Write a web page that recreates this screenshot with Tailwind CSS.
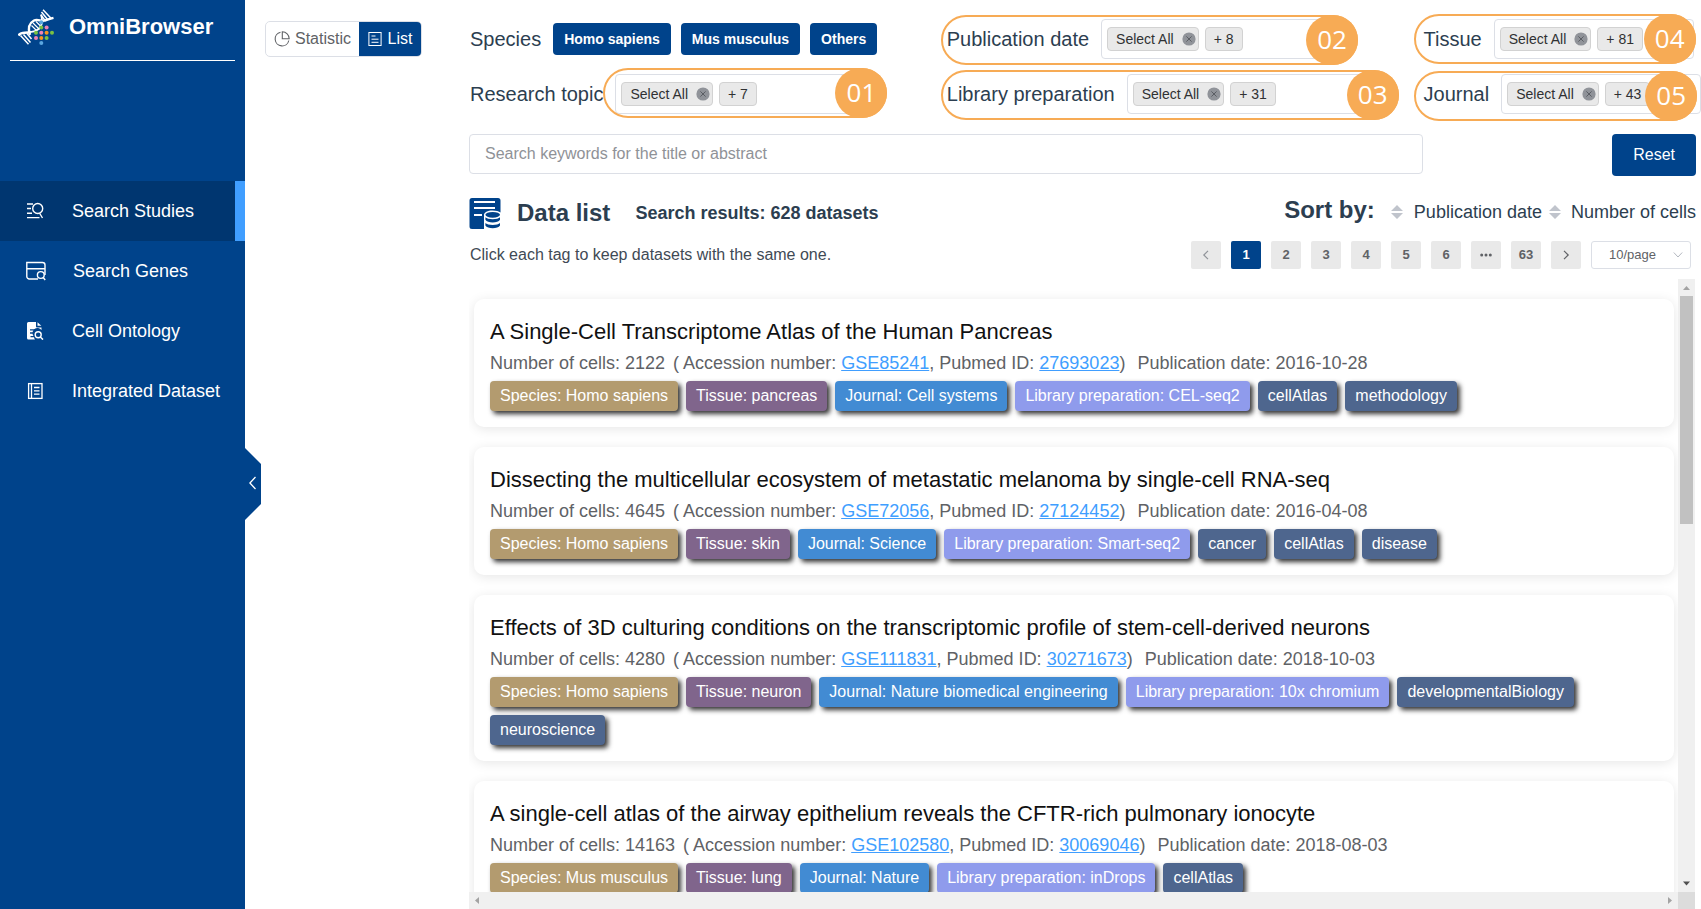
<!DOCTYPE html>
<html lang="en">
<head>
<meta charset="utf-8">
<meta name="viewport" content="width=device-width, initial-scale=1">
<title>OmniBrowser</title>
<script src="https://cdn.jsdelivr.net/npm/@tailwindcss/browser@4"></script>
</head>
<body class="flex h-screen overflow-hidden bg-white font-['Liberation_Sans',Arial,sans-serif] text-[#2c3e50]">

<!-- shared symbols -->
<svg class="hidden" aria-hidden="true">
  <symbol id="close" viewBox="0 0 14 14"><circle cx="7" cy="7" r="6.6" fill="#909399"/><path d="M4.4 4.4l5.2 5.2M9.6 4.4L4.4 9.6" stroke="#55585e" stroke-width=".9" fill="none"/></symbol>
  <symbol id="sort" viewBox="0 0 12 14"><path d="M6 0l6 6H0zM6 14L0 8h12z" fill="#c0c4cc"/></symbol>
</svg>

<aside class="relative flex w-[245px] shrink-0 flex-col bg-[#00438b] text-white">
  <div class="mx-2.5 flex h-[61px] items-start gap-[15px] border-b border-white pl-2">
    <svg class="mt-[9px] size-9" viewBox="0 0 36 36" fill="none" stroke="#fff">
      <path d="M.5 26.500C3 22 8 25 12.500 22.800" stroke-width="2.600"/>
      <path d="M12 26C10 20 10.500 14.500 16 11.500C20 9.500 23 13 27 11.500C30.500 10.500 32.500 9.500 35.500 8.800" stroke-width="2.400"/>
      <path d="M12 22.800C18 23.500 24 19 24 12C24 9.500 23.500 7 23 5.500" stroke-width="1.800"/>
      <path d="M25 .8l8.500 9M23.500 3l6.500 8M23 6l4 5.500M2.500 26.500l8 8.800M5.500 25.500l7 8M9 24.500l4.500 5.500" stroke-width="1.500"/>
      <path d="M15 14l6.500 6.500M13.500 16.500l5.500 5.500M18 12.500l4.500 4.500" stroke-width="1.200"/>
      <g stroke="none">
        <circle cx="23.300" cy="13.300" r="2" fill="#5ba7e0"/>
        <circle cx="23.300" cy="18.500" r="2" fill="#7ac143"/><circle cx="28.600" cy="18.500" r="2" fill="#ee82b4"/>
        <circle cx="18" cy="23.700" r="2" fill="#7ac143"/><circle cx="23.300" cy="23.700" r="2" fill="#ee82b4"/><circle cx="28.600" cy="23.700" r="2" fill="#f7941d"/><circle cx="34" cy="23.700" r="2" fill="#7ac143"/>
        <circle cx="18" cy="29" r="2" fill="#ee82b4"/><circle cx="23.300" cy="29" r="2" fill="#f7941d"/><circle cx="28.600" cy="29" r="2" fill="#7ac143"/>
        <circle cx="23.300" cy="34" r="2" fill="#5ba7e0"/>
      </g>
    </svg>
    <h1 class="mt-[13px] text-[22px] leading-7 font-bold">OmniBrowser</h1>
  </div>
  <nav class="mt-[120px] flex flex-col text-lg">
    <a href="#studies" aria-current="page" class="flex h-[60px] items-center gap-7 border-r-10 border-[#409eff] bg-[#003670] pl-[26px]">
      <svg class="size-[18px]" viewBox="0 0 18 18" fill="none" stroke="#fff" stroke-width="1.400"><path d="M1 2h6M1 6.500h4M1 11.300h5M1 15.600h12.500"/><circle cx="11.700" cy="6.500" r="5"/><path d="M13.500 11l3 5"/></svg>
      Search Studies</a>
    <a href="#genes" class="flex h-[60px] items-center gap-[27px] pl-[26px]">
      <svg class="size-5" viewBox="0 0 20 20" fill="none" stroke="#fff" stroke-width="1.400"><path d="M12 18H3.500A2.500 2.500 0 0 1 .8 15.500V1.500h15.700A2.500 2.500 0 0 1 19 4v10M.8 7.800H19"/><circle cx="14.800" cy="14" r="3.400"/><path d="M17.200 16.500l2 2.500"/></svg>
      Search Genes</a>
    <a href="#ontology" class="flex h-[60px] items-center gap-7 pl-[26px]">
      <svg class="size-[18px]" viewBox="0 0 18 18"><path d="M2.500 0H10v4.500a1 1 0 0 0 1 1h4.500V8A5 5 0 0 0 7.500 14H4.500v1.300h3.500A5 5 0 0 0 9 17.500H2.500A1.500 1.500 0 0 1 1 16V1.500A1.500 1.500 0 0 1 2.500 0z" fill="#fff"/><path d="M11.500.2l3.800 3.600h-3.800z" fill="#fff"/><path d="M4 7.800h6M4 11h3.500" stroke="#00438b" stroke-width="1.300"/><circle cx="12.200" cy="12.800" r="3" fill="none" stroke="#fff" stroke-width="1.400"/><path d="M14.300 15l2.700 2.600" stroke="#fff" stroke-width="1.500"/></svg>
      Cell Ontology</a>
    <a href="#integrated" class="flex h-[60px] items-center gap-7 pl-[26px]">
      <svg class="size-[18px]" viewBox="0 0 18 18" fill="none" stroke="#fff" stroke-width="1.300"><rect x="2.600" y="1.600" width="13.400" height="14.800"/><path d="M5.500 1.600v14.800M8 5.500h5.500M8 8.800h5.500M8 12.100h5.500"/></svg>
      Integrated Dataset</a>
  </nav>
  <button aria-label="Collapse sidebar" class="absolute top-[448px] left-full z-10 h-[72px] w-4 bg-[#00438b] pb-0.5 [clip-path:polygon(0_0,100%_16px,100%_56px,0_100%)]">
    <svg class="ml-1 h-3.5 w-2" viewBox="0 0 8 14" fill="none" stroke="#fff" stroke-width="1.300"><path d="M6.500 1L.9 7L6.500 13"/></svg>
  </button>
</aside>

<main class="flex min-w-0 flex-1 pl-5">
  <div class="w-[204px] shrink-0 pt-[21px]">
    <div class="flex h-9 w-[157px] overflow-hidden rounded-[5px] border border-[#dcdfe6] text-base">
      <button class="flex items-center gap-[5px] pl-2 pr-2 text-[#606266]">
        <svg class="size-4" viewBox="0 0 16 16" fill="none" stroke="#606266" stroke-width="1.100"><path d="M6.500 1.300A6.900 6.900 0 1 0 14.800 9.500M8.300.8v6.900h6.900A6.900 6.900 0 0 0 8.300.8z"/></svg>Statistic</button>
      <button class="flex flex-1 items-center justify-center gap-1.5 bg-[#00438b] text-white">
        <svg class="size-3.5" viewBox="0 0 14 14" fill="none" stroke="#fff"><rect x=".9" y=".5" width="12.200" height="13"/><path d="M3.500 4h4M3.500 7.200h7M3.500 10.300h7"/></svg>List</button>
    </div>
  </div>

  <div class="flex min-w-0 flex-1 flex-col pr-[5px]">
    <section class="grid grid-cols-[minmax(0,7fr)_minmax(0,7fr)_minmax(0,4fr)] gap-y-[15px] pt-[19px] pl-px text-xl">
      <div class="flex h-10 items-center gap-3">
        <span>Species</span>
        <div class="flex gap-2.5 text-sm font-bold text-white">
          <button class="h-8 rounded-[4px] bg-[#00438b] px-[11px]">Homo sapiens</button>
          <button class="h-8 rounded-[4px] bg-[#00438b] px-[11px]">Mus musculus</button>
          <button class="h-8 rounded-[4px] bg-[#00438b] px-[11px]">Others</button>
        </div>
      </div>

      <div class="relative flex h-10 w-max items-center gap-3">
        <span id="l2">Publication date</span>
        <div role="combobox" aria-labelledby="l2" aria-expanded="false" class="flex h-10 w-60 items-center gap-1.5 rounded-[4px] border border-[#dcdfe6] pl-[5px] text-sm text-[#303133]">
          <span class="flex h-6 items-center gap-2 rounded-[4px] border border-[#d2d2d2] bg-[#e9e9e9] pr-[2px] pl-2">Select All<button aria-label="Remove"><svg class="size-3.5"><use href="#close"/></svg></button></span>
          <span class="flex h-6 items-center rounded-[4px] border border-[#d2d2d2] bg-[#e9e9e9] px-2">+ 8</span>
        </div>
        <div class="pointer-events-none absolute -top-1 -right-[17px] -left-1.5 flex h-[50px] justify-end rounded-full border-2 border-[#f7ab55]"><span class="-m-0.5 flex h-[50px] w-[52px] items-center justify-center rounded-full bg-[#f7ab55] pb-0.5 font-['Open_Sans','Noto_Sans',sans-serif] text-[26px] text-white">02</span></div>
      </div>

      <div class="relative flex h-10 w-max items-center gap-3">
        <span id="l4">Tissue</span>
        <div role="combobox" aria-labelledby="l4" aria-expanded="false" class="flex h-10 w-50 items-center gap-1.5 rounded-[4px] border border-[#dcdfe6] pl-[5px] text-sm text-[#303133]">
          <span class="flex h-6 items-center gap-2 rounded-[4px] border border-[#d2d2d2] bg-[#e9e9e9] pr-[2px] pl-2">Select All<button aria-label="Remove"><svg class="size-3.5"><use href="#close"/></svg></button></span>
          <span class="flex h-6 items-center rounded-[4px] border border-[#d2d2d2] bg-[#e9e9e9] px-2">+ 81</span>
        </div>
        <div class="pointer-events-none absolute -top-[5px] -right-0.5 -left-2.5 flex h-[50px] justify-end rounded-full border-2 border-[#f7ab55]"><span class="-m-0.5 flex h-[50px] w-[52px] items-center justify-center rounded-full bg-[#f7ab55] pb-0.5 font-['Open_Sans','Noto_Sans',sans-serif] text-[26px] text-white">04</span></div>
      </div>

      <div class="flex h-10 items-center gap-3">
        <span id="l1" class="whitespace-nowrap">Research topic</span>
        <div class="relative">
          <div role="combobox" aria-labelledby="l1" aria-expanded="false" class="flex h-10 w-60 items-center gap-1.5 rounded-[4px] border border-[#dcdfe6] pl-[5px] text-sm text-[#303133]">
            <span class="flex h-6 items-center gap-2 rounded-[4px] border border-[#d2d2d2] bg-[#e9e9e9] pr-[2px] pl-2">Select All<button aria-label="Remove"><svg class="size-3.5"><use href="#close"/></svg></button></span>
            <span class="flex h-6 items-center rounded-[4px] border border-[#d2d2d2] bg-[#e9e9e9] px-2">+ 7</span>
          </div>
          <div class="pointer-events-none absolute -top-1.5 -right-8 -left-3 flex h-[50px] justify-end rounded-full border-2 border-[#f7ab55]"><span class="-m-0.5 flex h-[50px] w-[52px] items-center justify-center rounded-full bg-[#f7ab55] pb-0.5 font-['Open_Sans','Noto_Sans',sans-serif] text-[26px] text-white">01</span></div>
        </div>
      </div>

      <div class="relative flex h-10 w-max items-center gap-3">
        <span id="l3">Library preparation</span>
        <div role="combobox" aria-labelledby="l3" aria-expanded="false" class="flex h-10 w-60 items-center gap-1.5 rounded-[4px] border border-[#dcdfe6] pl-[5px] text-sm text-[#303133]">
          <span class="flex h-6 items-center gap-2 rounded-[4px] border border-[#d2d2d2] bg-[#e9e9e9] pr-[2px] pl-2">Select All<button aria-label="Remove"><svg class="size-3.5"><use href="#close"/></svg></button></span>
          <span class="flex h-6 items-center rounded-[4px] border border-[#d2d2d2] bg-[#e9e9e9] px-2">+ 31</span>
        </div>
        <div class="pointer-events-none absolute -top-1 -right-8 -left-1.5 flex h-[50px] justify-end rounded-full border-2 border-[#f7ab55]"><span class="-m-0.5 flex h-[50px] w-[52px] items-center justify-center rounded-full bg-[#f7ab55] pb-0.5 font-['Open_Sans','Noto_Sans',sans-serif] text-[26px] text-white">03</span></div>
      </div>

      <div class="relative flex h-10 w-max items-center gap-3">
        <span id="l5">Journal</span>
        <div role="combobox" aria-labelledby="l5" aria-expanded="false" class="flex h-10 w-50 items-center gap-1.5 rounded-[4px] border border-[#dcdfe6] pl-[5px] text-sm text-[#303133]">
          <span class="flex h-6 items-center gap-2 rounded-[4px] border border-[#d2d2d2] bg-[#e9e9e9] pr-[2px] pl-2">Select All<button aria-label="Remove"><svg class="size-3.5"><use href="#close"/></svg></button></span>
          <span class="flex h-6 items-center rounded-[4px] border border-[#d2d2d2] bg-[#e9e9e9] px-2">+ 43</span>
        </div>
        <div class="pointer-events-none absolute -top-[3px] right-1 -left-2.5 flex h-[50px] justify-end rounded-full border-2 border-[#f7ab55]"><span class="-m-0.5 flex h-[50px] w-[52px] items-center justify-center rounded-full bg-[#f7ab55] pb-0.5 font-['Open_Sans','Noto_Sans',sans-serif] text-[26px] text-white">05</span></div>
      </div>
    </section>

    <div class="mt-5 flex items-start">
      <input type="search" aria-label="Search keywords" placeholder="Search keywords for the title or abstract" class="h-10 w-7/9 rounded-[4px] border border-[#dcdfe6] px-[15px] text-base placeholder:text-[#8f9297]">
      <button class="ml-auto h-[42px] rounded-[4px] bg-[#00438b] px-[21px] text-base text-white">Reset</button>
    </div>

    <div class="mt-[18px] flex h-[37px] items-center">
      <svg class="size-8" viewBox="0 0 32 32"><path d="M3 1h26a2.500 2.500 0 0 1 2.500 2.500V15.500c-1.500-1.300-4.500-2-8-2-5 0-8.500 2-8.500 4.500v14H3A2.500 2.500 0 0 1 .5 29.500v-26A2.500 2.500 0 0 1 3 1z" fill="#00438b"/><path d="M5 5h21M5 11h21M5 18h8" stroke="#fff" stroke-width="1.800"/><ellipse cx="23.700" cy="17.800" rx="7.300" ry="2.900" fill="#00438b"/><path d="M16.400 20.300c2 2.600 12.600 2.600 14.600 0v2.500c-2 3.700-12.600 3.700-14.600 0zM16.400 26c2 2.600 12.600 2.600 14.600 0v2.500c-2 3.700-12.600 3.700-14.600 0z" fill="#00438b"/></svg>
      <h2 class="ml-4 text-2xl font-bold">Data list</h2>
      <p class="ml-[25px] text-lg font-bold">Search results: 628 datasets</p>
      <div class="mb-0.5 ml-auto flex items-center text-lg">
        <span class="mb-1 text-2xl font-bold">Sort by:</span>
        <button class="ml-4 flex items-center gap-[11px]"><svg class="h-3.5 w-3"><use href="#sort"/></svg>Publication date</button>
        <button class="ml-[7px] flex items-center gap-2.5"><svg class="h-3.5 w-3"><use href="#sort"/></svg>Number of cells</button>
      </div>
    </div>

    <div class="mt-2.5 flex h-7 items-center text-[13px] text-[#606266]">
      <p class="pl-px text-base text-[#3f4a55]">Click each tag to keep datasets with the same one.</p>
      <div class="mr-[5px] ml-auto flex gap-2.5 font-bold">
        <button aria-label="Previous page" class="flex h-7 w-[30px] items-center justify-center rounded-[2px] bg-[#e9e9e9]"><svg class="size-2.5" viewBox="0 0 10 10" fill="none" stroke="#909399" stroke-width="1.200"><path d="M7 .8L2.800 5L7 9.200"/></svg></button>
        <button class="h-7 w-[30px] rounded-[2px] bg-[#00438b] text-white">1</button>
        <button class="h-7 w-[30px] rounded-[2px] bg-[#e9e9e9]">2</button>
        <button class="h-7 w-[30px] rounded-[2px] bg-[#e9e9e9]">3</button>
        <button class="h-7 w-[30px] rounded-[2px] bg-[#e9e9e9]">4</button>
        <button class="h-7 w-[30px] rounded-[2px] bg-[#e9e9e9]">5</button>
        <button class="h-7 w-[30px] rounded-[2px] bg-[#e9e9e9]">6</button>
        <button aria-label="More pages" class="flex h-7 w-[30px] items-center justify-center rounded-[2px] bg-[#e9e9e9]"><svg class="h-1 w-3" viewBox="0 0 12 4" fill="#606266"><circle cx="1.700" cy="2" r="1.500"/><circle cx="6" cy="2" r="1.500"/><circle cx="10.300" cy="2" r="1.500"/></svg></button>
        <button class="h-7 w-[30px] rounded-[2px] bg-[#e9e9e9]">63</button>
        <button aria-label="Next page" class="flex h-7 w-[30px] items-center justify-center rounded-[2px] bg-[#e9e9e9]"><svg class="size-2.5" viewBox="0 0 10 10" fill="none" stroke="#606266" stroke-width="1.200"><path d="M3 .8L7.200 5L3 9.200"/></svg></button>
        <div class="relative font-normal">
          <select aria-label="Page size" class="h-7 w-[100px] appearance-none rounded-[3px] border border-[#dcdfe6] bg-white pl-[17px]"><option>10/page</option></select>
          <svg class="pointer-events-none absolute top-2.5 right-2 h-2 w-2.5" viewBox="0 0 10 8" fill="none" stroke="#b4b8c0"><path d="M.8 1.500L5 6L9.200 1.500"/></svg>
        </div>
      </div>
    </div>

    <div class="mt-2.5 mr-px grid min-h-0 flex-1 grid-cols-[minmax(0,1fr)_17px] grid-rows-[minmax(0,1fr)_17px]">
      <div class="flex flex-col gap-5 overflow-hidden pt-5 pr-1 pl-[5px] text-[#606266]">

        <article class="shrink-0 rounded-[10px] bg-white p-4 shadow-[0_2px_12px_rgba(0,0,0,0.1)]">
          <h3 class="text-[22px] leading-[34px] text-[#111]">A Single-Cell Transcriptome Atlas of the Human Pancreas</h3>
          <p class="mb-1 text-lg leading-7">Number of cells: 2122<span class="ml-2">( Accession number: <a href="#" class="text-[#409eff] underline">GSE85241</a>, Pubmed ID: <a href="#" class="text-[#409eff] underline">27693023</a>)</span><span class="ml-3">Publication date: 2016-10-28</span></p>
          <div class="flex flex-wrap gap-2 text-base text-white">
            <button class="h-[30px] rounded-[4px] bg-[#b39b6f] px-2.5 shadow-[3px_3px_5px_rgba(0,0,0,0.8)]">Species: Homo sapiens</button>
            <button class="h-[30px] rounded-[4px] bg-[#80658c] px-2.5 shadow-[3px_3px_5px_rgba(0,0,0,0.8)]">Tissue: pancreas</button>
            <button class="h-[30px] rounded-[4px] bg-[#428bd3] px-2.5 shadow-[3px_3px_5px_rgba(0,0,0,0.8)]">Journal: Cell systems</button>
            <button class="h-[30px] rounded-[4px] bg-[#8f9bec] px-2.5 shadow-[3px_3px_5px_rgba(0,0,0,0.8)]">Library preparation: CEL-seq2</button>
            <button class="h-[30px] rounded-[4px] bg-[#4e668e] px-2.5 shadow-[3px_3px_5px_rgba(0,0,0,0.8)]">cellAtlas</button>
            <button class="h-[30px] rounded-[4px] bg-[#4e668e] px-2.5 shadow-[3px_3px_5px_rgba(0,0,0,0.8)]">methodology</button>
          </div>
        </article>

        <article class="shrink-0 rounded-[10px] bg-white p-4 shadow-[0_2px_12px_rgba(0,0,0,0.1)]">
          <h3 class="text-[22px] leading-[34px] text-[#111]">Dissecting the multicellular ecosystem of metastatic melanoma by single-cell RNA-seq</h3>
          <p class="mb-1 text-lg leading-7">Number of cells: 4645<span class="ml-2">( Accession number: <a href="#" class="text-[#409eff] underline">GSE72056</a>, Pubmed ID: <a href="#" class="text-[#409eff] underline">27124452</a>)</span><span class="ml-3">Publication date: 2016-04-08</span></p>
          <div class="flex flex-wrap gap-2 text-base text-white">
            <button class="h-[30px] rounded-[4px] bg-[#b39b6f] px-2.5 shadow-[3px_3px_5px_rgba(0,0,0,0.8)]">Species: Homo sapiens</button>
            <button class="h-[30px] rounded-[4px] bg-[#80658c] px-2.5 shadow-[3px_3px_5px_rgba(0,0,0,0.8)]">Tissue: skin</button>
            <button class="h-[30px] rounded-[4px] bg-[#428bd3] px-2.5 shadow-[3px_3px_5px_rgba(0,0,0,0.8)]">Journal: Science</button>
            <button class="h-[30px] rounded-[4px] bg-[#8f9bec] px-2.5 shadow-[3px_3px_5px_rgba(0,0,0,0.8)]">Library preparation: Smart-seq2</button>
            <button class="h-[30px] rounded-[4px] bg-[#4e668e] px-2.5 shadow-[3px_3px_5px_rgba(0,0,0,0.8)]">cancer</button>
            <button class="h-[30px] rounded-[4px] bg-[#4e668e] px-2.5 shadow-[3px_3px_5px_rgba(0,0,0,0.8)]">cellAtlas</button>
            <button class="h-[30px] rounded-[4px] bg-[#4e668e] px-2.5 shadow-[3px_3px_5px_rgba(0,0,0,0.8)]">disease</button>
          </div>
        </article>

        <article class="shrink-0 rounded-[10px] bg-white p-4 shadow-[0_2px_12px_rgba(0,0,0,0.1)]">
          <h3 class="text-[22px] leading-[34px] text-[#111]">Effects of 3D culturing conditions on the transcriptomic profile of stem-cell-derived neurons</h3>
          <p class="mb-1 text-lg leading-7">Number of cells: 4280<span class="ml-2">( Accession number: <a href="#" class="text-[#409eff] underline">GSE111831</a>, Pubmed ID: <a href="#" class="text-[#409eff] underline">30271673</a>)</span><span class="ml-3">Publication date: 2018-10-03</span></p>
          <div class="flex flex-wrap gap-2 text-base text-white">
            <button class="h-[30px] rounded-[4px] bg-[#b39b6f] px-2.5 shadow-[3px_3px_5px_rgba(0,0,0,0.8)]">Species: Homo sapiens</button>
            <button class="h-[30px] rounded-[4px] bg-[#80658c] px-2.5 shadow-[3px_3px_5px_rgba(0,0,0,0.8)]">Tissue: neuron</button>
            <button class="h-[30px] rounded-[4px] bg-[#428bd3] px-2.5 shadow-[3px_3px_5px_rgba(0,0,0,0.8)]">Journal: Nature biomedical engineering</button>
            <button class="h-[30px] rounded-[4px] bg-[#8f9bec] px-2.5 shadow-[3px_3px_5px_rgba(0,0,0,0.8)]">Library preparation: 10x chromium</button>
            <button class="h-[30px] rounded-[4px] bg-[#4e668e] px-2.5 shadow-[3px_3px_5px_rgba(0,0,0,0.8)]">developmentalBiology</button>
            <button class="h-[30px] rounded-[4px] bg-[#4e668e] px-2.5 shadow-[3px_3px_5px_rgba(0,0,0,0.8)]">neuroscience</button>
          </div>
        </article>

        <article class="shrink-0 rounded-[10px] bg-white p-4 shadow-[0_2px_12px_rgba(0,0,0,0.1)]">
          <h3 class="text-[22px] leading-[34px] text-[#111]">A single-cell atlas of the airway epithelium reveals the CFTR-rich pulmonary ionocyte</h3>
          <p class="mb-1 text-lg leading-7">Number of cells: 14163<span class="ml-2">( Accession number: <a href="#" class="text-[#409eff] underline">GSE102580</a>, Pubmed ID: <a href="#" class="text-[#409eff] underline">30069046</a>)</span><span class="ml-3">Publication date: 2018-08-03</span></p>
          <div class="flex flex-wrap gap-2 text-base text-white">
            <button class="h-[30px] rounded-[4px] bg-[#b39b6f] px-2.5 shadow-[3px_3px_5px_rgba(0,0,0,0.8)]">Species: Mus musculus</button>
            <button class="h-[30px] rounded-[4px] bg-[#80658c] px-2.5 shadow-[3px_3px_5px_rgba(0,0,0,0.8)]">Tissue: lung</button>
            <button class="h-[30px] rounded-[4px] bg-[#428bd3] px-2.5 shadow-[3px_3px_5px_rgba(0,0,0,0.8)]">Journal: Nature</button>
            <button class="h-[30px] rounded-[4px] bg-[#8f9bec] px-2.5 shadow-[3px_3px_5px_rgba(0,0,0,0.8)]">Library preparation: inDrops</button>
            <button class="h-[30px] rounded-[4px] bg-[#4e668e] px-2.5 shadow-[3px_3px_5px_rgba(0,0,0,0.8)]">cellAtlas</button>
          </div>
        </article>
      </div>

      <!-- vertical scroll bar -->
      <div class="flex flex-col items-center justify-between bg-[#f0f0f0]">
        <svg class="h-[17px] w-[17px] shrink-0" viewBox="0 0 17 17"><path d="M5 11h7l-3.500-4z" fill="#a3a3a3"/></svg>
        <div class="w-[13px] flex-1"><div class="h-[39.4%] bg-[#c1c1c1]"></div></div>
        <svg class="h-[17px] w-[17px] shrink-0" viewBox="0 0 17 17"><path d="M5 6.500h7l-3.500 4z" fill="#505050"/></svg>
      </div>
      <!-- horizontal scroll bar -->
      <div class="flex justify-between bg-[#f0f0f0]">
        <svg class="h-[17px] w-[17px]" viewBox="0 0 17 17"><path d="M10 5v7l-4-3.500z" fill="#a3a3a3"/></svg>
        <svg class="h-[17px] w-[17px]" viewBox="0 0 17 17"><path d="M7 5v7l4-3.500z" fill="#a3a3a3"/></svg>
      </div>
      <div class="bg-[#dcdcdc]"></div>
    </div>
  </div>
</main>
</body>
</html>
